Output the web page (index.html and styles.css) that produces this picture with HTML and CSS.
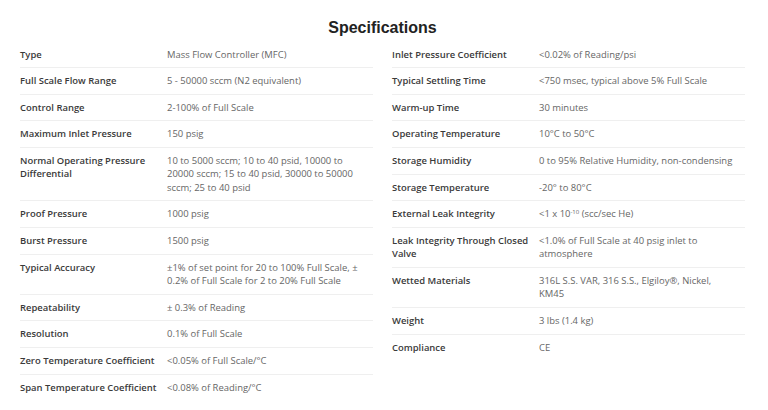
FILE: index.html
```html
<!DOCTYPE html>
<html>
<head>
<meta charset="utf-8">
<link rel="stylesheet" href="styles.css">
</head>
<body>
<section class="specs">
  <h2 class="title">Specifications</h2>
  <div class="cols">
    <div class="col">
      <div class="row"><div class="k">Type</div><div class="v">Mass Flow Controller (MFC)</div></div>
      <div class="row"><div class="k">Full Scale Flow Range</div><div class="v">5 - 50000 sccm (N2 equivalent)</div></div>
      <div class="row"><div class="k">Control Range</div><div class="v">2-100% of Full Scale</div></div>
      <div class="row"><div class="k">Maximum Inlet Pressure</div><div class="v">150 psig</div></div>
      <div class="row"><div class="k">Normal Operating Pressure Differential</div><div class="v">10 to 5000 sccm; 10 to 40 psid, 10000 to 20000 sccm; 15 to 40 psid, 30000 to 50000 sccm; 25 to 40 psid</div></div>
      <div class="row"><div class="k">Proof Pressure</div><div class="v">1000 psig</div></div>
      <div class="row"><div class="k">Burst Pressure</div><div class="v">1500 psig</div></div>
      <div class="row"><div class="k">Typical Accuracy</div><div class="v">±1% of set point for 20 to 100% Full Scale, ± 0.2% of Full Scale for 2 to 20% Full Scale</div></div>
      <div class="row"><div class="k">Repeatability</div><div class="v">± 0.3% of Reading</div></div>
      <div class="row"><div class="k">Resolution</div><div class="v">0.1% of Full Scale</div></div>
      <div class="row"><div class="k">Zero Temperature Coefficient</div><div class="v">&lt;0.05% of Full Scale/°C</div></div>
      <div class="row"><div class="k">Span Temperature Coefficient</div><div class="v">&lt;0.08% of Reading/°C</div></div>
    </div>
    <div class="col">
      <div class="row"><div class="k">Inlet Pressure Coefficient</div><div class="v">&lt;0.02% of Reading/psi</div></div>
      <div class="row"><div class="k">Typical Settling Time</div><div class="v">&lt;750 msec, typical above 5% Full Scale</div></div>
      <div class="row"><div class="k">Warm-up Time</div><div class="v">30 minutes</div></div>
      <div class="row"><div class="k">Operating Temperature</div><div class="v">10°C to 50°C</div></div>
      <div class="row"><div class="k">Storage Humidity</div><div class="v">0 to 95% Relative Humidity, non-condensing</div></div>
      <div class="row"><div class="k">Storage Temperature</div><div class="v">-20° to 80°C</div></div>
      <div class="row"><div class="k">External Leak Integrity</div><div class="v">&lt;1 x 10<sup>-10</sup> (scc/sec He)</div></div>
      <div class="row"><div class="k">Leak Integrity Through Closed Valve</div><div class="v">&lt;1.0% of Full Scale at 40 psig inlet to atmosphere</div></div>
      <div class="row"><div class="k">Wetted Materials</div><div class="v">316L S.S. VAR, 316 S.S., Elgiloy®, Nickel, KM45</div></div>
      <div class="row"><div class="k">Weight</div><div class="v">3 lbs (1.4 kg)</div></div>
      <div class="row"><div class="k">Compliance</div><div class="v">CE</div></div>
    </div>
  </div>
</section>
</body>
</html>
```
FILE: styles.css
```css
html, body {
  margin: 0;
  padding: 0;
  background: #ffffff;
}
.specs {
  padding: 0 23px 0 20px;
  font-family: "Open Sans", "Liberation Sans", sans-serif;
}
.title {
  margin: 0;
  padding-top: 18px;
  height: 20px;
  line-height: 20px;
  text-align: center;
  font-family: "Liberation Sans", Arial, sans-serif;
  font-weight: 700;
  font-size: 16px;
  color: #222222;
}
.cols {
  margin-top: 3.5px;
  display: grid;
  grid-template-columns: 1fr 1fr;
  column-gap: 19px;
  align-items: start;
}
.row {
  display: grid;
  grid-template-columns: 147px 1fr;
  padding: 6px 0 6.33px;
  border-bottom: 1px solid #efefef;
  font-size: 9.45px;
  line-height: 13.33px;
}
.row:last-child {
  border-bottom: none;
}
.k {
  font-weight: 600;
  color: #3a3a3a;
  padding-right: 6px;
}
.v {
  color: #666666;
  padding-right: 9px;
}
.v sup {
  font-size: 6px;
  line-height: 0;
  vertical-align: 3px;
}
```
